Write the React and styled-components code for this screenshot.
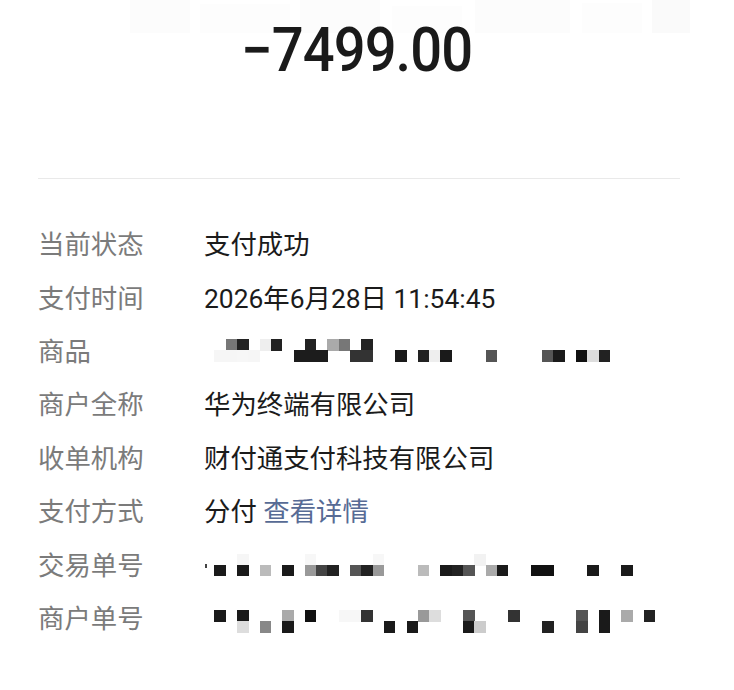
import React from "react";
import styled, { createGlobalStyle } from "styled-components";

const CELL = 11.3;
const ORIGIN = 10.4;

const rows = [
  { label: "当前状态", value: "支付成功" },
  { label: "支付时间", value: "2026年6月28日 11:54:45" },
  {
    label: "商品",
    mosaic: {
      shift: 0,
      cells: [
        [
          [1, "#777"], [2, "#222"], [4, "#eee"], [5, "#222"], [8, "#222"],
          [10, "#aaa"], [11, "#777"], [13, "#222"],
        ],
        [
          [0, "#f6f6f6"], [1, "#f6f6f6"], [2, "#f7f7f7"], [3, "#f6f6f6"],
          [7, "#1c1c1c"], [8, "#1c1c1c"], [9, "#1c1c1c"], [12, "#333"],
          [13, "#333"], [16, "#1a1a1a"], [18, "#222"], [19, "#eee"],
          [20, "#1a1a1a"], [24, "#555"], [29, "#555"], [30, "#1a1a1a"],
          [32, "#111"], [33, "#ddd"], [34, "#222"],
        ],
      ],
    },
  },
  { label: "商户全称", value: "华为终端有限公司" },
  { label: "收单机构", value: "财付通支付科技有限公司" },
  { label: "支付方式", value: "分付", link: "查看详情" },
  {
    label: "交易单号",
    mosaic: {
      shift: 1,
      tick: true,
      cells: [
        [[2, "#f6f6f6"], [8, "#f7f7f7"], [14, "#f7f7f7"], [23, "#f2f2f2"]],
        [
          [0, "#1a1a1a"], [2, "#1a1a1a"], [4, "#bbb"], [6, "#1a1a1a"],
          [8, "#999"], [9, "#444"], [10, "#222"], [12, "#555"], [13, "#222"],
          [14, "#999"], [18, "#bbb"], [20, "#1a1a1a"], [21, "#222"],
          [22, "#555"], [24, "#aaa"], [25, "#1a1a1a"], [28, "#111"],
          [29, "#111"], [33, "#1a1a1a"], [36, "#1a1a1a"],
        ],
      ],
    },
  },
  {
    label: "商户单号",
    mosaic: {
      shift: 4,
      cells: [
        [
          [0, "#1a1a1a"], [2, "#1a1a1a"], [6, "#aaa"], [8, "#111"],
          [11, "#f7f7f7"], [12, "#f7f7f7"], [13, "#333"], [18, "#999"],
          [19, "#ddd"], [22, "#555"], [26, "#333"], [32, "#555"],
          [34, "#1a1a1a"], [36, "#aaa"], [38, "#222"],
        ],
        [
          [2, "#ddd"], [4, "#888"], [6, "#1a1a1a"], [15, "#1a1a1a"],
          [17, "#1a1a1a"], [22, "#1a1a1a"], [23, "#ccc"], [29, "#222"],
          [32, "#444"], [34, "#1a1a1a"],
        ],
      ],
    },
  },
];

// barely visible remains of the blurred title above the amount
const faintBlocks = [
  [0, 0, 60, 33, "#fcfcfc"],
  [70, 4, 90, 29, "#fdfdfd"],
  [170, 0, 80, 33, "#fcfcfc"],
  [262, 6, 70, 27, "#fdfdfd"],
  [345, 0, 95, 33, "#fcfcfc"],
  [452, 3, 60, 30, "#fdfdfd"],
  [522, 0, 38, 33, "#fafafa"],
];

const Mosaic = ({ cells, shift, tick }) => (
  <MosaicSvg
    $shift={shift}
    width={ORIGIN + 40 * CELL}
    height={CELL * 2}
    shapeRendering="crispEdges"
  >
    {cells.map((row, r) =>
      row.map(([i, c]) => (
        <rect
          key={`${r}-${i}`}
          x={ORIGIN + i * CELL}
          y={r * CELL}
          width={CELL + 0.2}
          height={CELL + 0.2}
          fill={c}
        />
      ))
    )}
    {tick && <rect x={1} y={CELL - 1} width={2} height={4} fill="#444" />}
  </MosaicSvg>
);

const App = () => {
  return (
    <>
      <GlobalStyle />
      <Page>
        <Header>
          <FaintStrip width={560} height={33}>
            {faintBlocks.map(([x, y, w, h, c]) => (
              <rect key={x} x={x} y={y} width={w} height={h} fill={c} />
            ))}
          </FaintStrip>
          <Amount>−7499.00</Amount>
        </Header>
        <Divider />
        <List>
          {rows.map((row) => (
            <Row key={row.label}>
              <Label>{row.label}</Label>
              <Value>
                {row.mosaic ? (
                  <Mosaic {...row.mosaic} />
                ) : (
                  <>
                    {row.value}
                    {row.link && <Link> {row.link}</Link>}
                  </>
                )}
              </Value>
            </Row>
          ))}
        </List>
      </Page>
    </>
  );
};

const GlobalStyle = createGlobalStyle`
  body {
    margin: 0;
    background: #fff;
    font-family: Roboto, "Noto Sans CJK SC", sans-serif;
  }
`;

const Page = styled.div`
  width: 734px;
  height: 690px;
  padding: 0 54px 0 38px;
  box-sizing: border-box;
  background: #fff;
  overflow: hidden;
`;

const Header = styled.div`
  position: relative;
  height: 178px;
  display: flex;
  justify-content: center;
  align-items: flex-start;
  padding-top: 20px;
  box-sizing: border-box;
`;

const FaintStrip = styled.svg`
  position: absolute;
  top: 0;
  left: 92px;
`;

const Amount = styled.div`
  position: relative;
  font-family: Roboto, sans-serif;
  font-weight: 500;
  font-size: 61px;
  line-height: 60px;
  letter-spacing: -1px;
  color: #1a1a1a;
  transform: scaleX(0.92);
  margin-left: -4px;
`;

const Divider = styled.div`
  height: 1px;
  background: #e9e9e9;
`;

const List = styled.div`
  padding-top: 37px;
  display: flex;
  flex-direction: column;
`;

const Row = styled.div`
  height: 53.4px;
  display: flex;
  align-items: center;
  font-size: 26.4px;
`;

const Label = styled.div`
  width: 166px;
  flex-shrink: 0;
  color: #7b7b7b;
  font-family: "Noto Sans CJK SC", sans-serif;
`;

const Value = styled.div`
  display: flex;
  align-items: center;
  color: #1b1b1b;
  white-space: pre;
`;

const Link = styled.span`
  color: #576b95;
`;

const MosaicSvg = styled.svg`
  display: block;
  transform: translateY(${(p) => p.$shift + 1}px);
`;

export default App;
